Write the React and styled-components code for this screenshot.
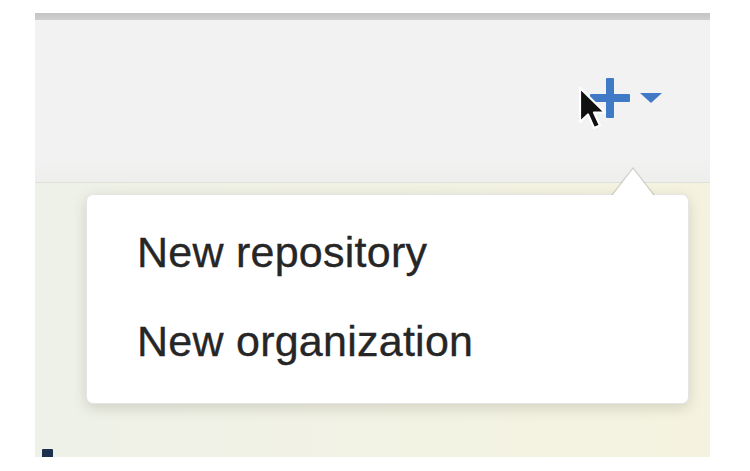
import React from "react";
import styled, { createGlobalStyle } from "styled-components";

const Global = createGlobalStyle`
  html, body { margin: 0; padding: 0; background: #ffffff; }
  body { font-family: "Liberation Sans", Arial, sans-serif; }
`;

const Page = styled.div`
  width: 750px;
  height: 471px;
  overflow: hidden;
  padding: 13px 40px 0 35px;
  box-sizing: border-box;
`;

const TopLine = styled.div`
  height: 7px;
  background: linear-gradient(#c4c4c4, #cfcfcf);
`;

const Header = styled.header`
  position: relative;
  height: 163px;
  box-sizing: border-box;
  background: linear-gradient(#f2f2f2 0%, #f2f2f2 85%, #eeeeec 100%);
  border-bottom: 1px solid #e0e0dc;
  display: flex;
  justify-content: flex-end;
  align-items: flex-start;
  padding: 58px 48px 0 0;
`;

const AddButton = styled.button`
  display: flex;
  align-items: center;
  gap: 10px;
  background: none;
  border: 0;
  padding: 0;
  cursor: pointer;
`;

const Content = styled.main`
  position: relative;
  height: 274px;
  background: linear-gradient(90deg, #eef1e8 0%, #f1f2e5 40%, #f5f3e0 100%);
  padding: 11px 0 0 51px;
  box-sizing: border-box;
`;

const Menu = styled.div`
  position: relative;
  width: 603px;
  height: 210px;
  box-sizing: border-box;
  background: #ffffff;
  border: 1px solid rgba(0, 0, 0, 0.1);
  border-radius: 7px;
  box-shadow: 0 4px 14px rgba(60, 60, 40, 0.18);
  padding: 13px 0 0 50px;

  &::before {
    content: "";
    position: absolute;
    top: -28px;
    left: 524px;
    border: 22px solid transparent;
    border-top-width: 0;
    border-bottom: 28px solid rgba(0, 0, 0, 0.13);
  }
  &::after {
    content: "";
    position: absolute;
    top: -26px;
    left: 525px;
    border: 21px solid transparent;
    border-top-width: 0;
    border-bottom: 27px solid #ffffff;
  }
`;

const MenuItem = styled.a`
  display: block;
  font-size: 43px;
  line-height: 89px;
  color: #262626;
  text-decoration: none;
  letter-spacing: 0.25px;
  -webkit-text-stroke: 0.35px #262626;
`;

const Fragment = styled.div`
  position: absolute;
  left: 7px;
  bottom: 0;
  width: 11px;
  height: 8px;
  background: #1c3150;
  border-radius: 1px 1px 0 0;
`;

const Cursor = styled.svg`
  position: absolute;
  left: 543px;
  top: 66px;
  pointer-events: none;
`;

export default function App() {
  return (
    <>
      <Global />
      <Page>
        <TopLine />
        <Header>
          <AddButton aria-label="Create new">
            <svg width="40" height="40" viewBox="0 0 40 40">
              <rect x="16" y="0" width="8" height="40" rx="1" fill="#4079c6" />
              <rect x="0" y="16" width="40" height="8" rx="1" fill="#4079c6" />
            </svg>
            <svg width="22" height="12" viewBox="0 0 22 12">
              <path d="M0 1 L22 1 L11 11 Z" fill="#4079c6" />
            </svg>
          </AddButton>
          <Cursor width="32" height="46" viewBox="0 0 32 46">
            <path
              d="M2 2 L2 36 L10 28.5 L16 42 L22 39.5 L16 26.5 L27 26.5 Z"
              fill="#111"
              stroke="#fff"
              strokeWidth="2.2"
              strokeLinejoin="round"
            />
          </Cursor>
        </Header>
        <Content>
          <Menu>
            <MenuItem href="#">New repository</MenuItem>
            <MenuItem href="#">New organization</MenuItem>
          </Menu>
          <Fragment />
        </Content>
      </Page>
    </>
  );
}
